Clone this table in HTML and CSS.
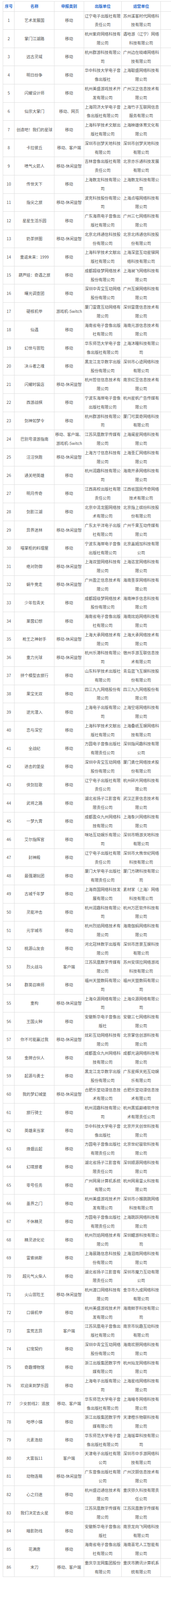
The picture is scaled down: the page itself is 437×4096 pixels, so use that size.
FILE: index.html
```html
<!DOCTYPE html>
<html lang="zh-CN">
<head>
<meta charset="utf-8">
<title>游戏名单</title>
<link rel="stylesheet" href="styles.css">
</head>
<body>
<div class="page">
<table class="list">
<colgroup>
<col class="c-no"><col class="c-name"><col class="c-type"><col class="c-pub"><col class="c-op"><col class="c-more">
</colgroup>
<thead>
<tr><th>序号</th><th>名称</th><th>申报类别</th><th>出版单位</th><th>运营单位</th><th></th></tr>
</thead>
<tbody>
<tr><td>1</td><td>艺术发展国</td><td>移动</td><td>辽宁电子出版社有限责任公司</td><td>苏州溪客时代网络科技有限公司</td><td></td></tr>
<tr><td>2</td><td>掌门江湖路</td><td>移动</td><td>杭州紫府网络科技有限公司</td><td>遇哈游（辽宁）网络科技有限公司</td><td></td></tr>
<tr><td>3</td><td>远古灵域</td><td>移动</td><td>杭州群游科技有限公司</td><td>广州边在晓峰网络科技有限公司</td><td></td></tr>
<tr><td>4</td><td>明日纷争</td><td>移动</td><td>华中科技大学电子音像出版社</td><td>上海聪盛网络科技有限公司</td><td></td></tr>
<tr><td>5</td><td>闪耀设计师</td><td>移动</td><td>杭州美盛游戏技术开发有限公司</td><td>广州汉正信息技术有限公司</td><td></td></tr>
<tr><td>6</td><td>仙宗大掌门</td><td>移动、网页</td><td>上海同济大学电子音像出版社有限公司</td><td>上海竹子互联网信息服务有限公司</td><td></td></tr>
<tr><td>7</td><td>创造吧！我们的星球</td><td>移动</td><td>上海科学技术文献出版社有限公司</td><td>上海映雄体育文化有限公司</td><td></td></tr>
<tr><td>8</td><td>卡拉彼丘</td><td>移动、客户端</td><td>深圳市创梦天地科技有限公司</td><td>深圳市创梦天地科技有限公司</td><td></td></tr>
<tr><td>9</td><td>喷气火箭人</td><td>移动-休闲益智</td><td>吉林音像出版社有限责任公司</td><td>北京亦乐通科技发展有限公司</td><td></td></tr>
<tr><td>10</td><td>传世天下</td><td>移动</td><td>上海数龙科技有限公司</td><td>上海数龙科技有限公司</td><td></td></tr>
<tr><td>11</td><td>指尖之旅</td><td>移动-休闲益智</td><td>波克科技股份有限公司</td><td>上海点喵网络科技有限公司</td><td></td></tr>
<tr><td>12</td><td>星星生活乐园</td><td>移动</td><td>广东海燕电子音像出版社有限公司</td><td>广州三七网络科技有限公司</td><td></td></tr>
<tr><td>13</td><td>奶茶拼图</td><td>移动-休闲益智</td><td>北京北纬通信科技股份有限公司</td><td>北京北纬通信科技股份有限公司</td><td></td></tr>
<tr><td>14</td><td>重返未来：1999</td><td>移动</td><td>上海科学技术文献出版社有限公司</td><td>上海深蓝互动星锑网络科技有限公司</td><td></td></tr>
<tr><td>15</td><td>葫芦娃：奇遇之旅</td><td>移动</td><td>成都超级梦网络技术股份有限公司</td><td>上海昶飞网络科技有限公司</td><td></td></tr>
<tr><td>16</td><td>曙光调查团</td><td>移动</td><td>深圳中青宝互动网络股份有限公司</td><td>广州互娱网络科技有限公司</td><td></td></tr>
<tr><td>17</td><td>硬核机甲</td><td>游戏机-Switch</td><td>厦门雷霆互动网络有限公司</td><td>深圳雷霆信息技术有限公司</td><td></td></tr>
<tr><td>18</td><td>仙遇</td><td>移动</td><td>海南省电子音像出版社有限公司</td><td>海南元游信息技术有限公司</td><td></td></tr>
<tr><td>19</td><td>幻世与冒险</td><td>移动</td><td>华东师范大学电子音像出版社有限公司</td><td>上海沐瞳科技有限公司</td><td></td></tr>
<tr><td>20</td><td>决斗者之魂</td><td>移动</td><td>黑龙江龙华数字出版股份有限公司</td><td>深圳市心迹网络科技有限公司</td><td></td></tr>
<tr><td>21</td><td>闪耀时装店</td><td>移动-休闲益智</td><td>杭州哲信信息技术有限公司</td><td>南京红豆信息技术有限公司</td><td></td></tr>
<tr><td>22</td><td>西游战棋</td><td>移动</td><td>宁波东海岸电子音像出版社有限公司</td><td>杭州星帆广告传媒有限公司</td><td></td></tr>
<tr><td>23</td><td>剑神如梦令</td><td>移动</td><td>杭州群游科技有限公司</td><td>厦门可莫奇网络科技有限公司</td><td></td></tr>
<tr><td>24</td><td>巴别号漫游指南</td><td>移动、客户端、游戏机-Switch</td><td>江苏凤凰数字传媒有限公司</td><td>上海阑星网络科技有限公司</td><td></td></tr>
<tr><td>25</td><td>汪汪快跑</td><td>移动-休闲益智</td><td>上海方寸信息科技有限公司</td><td>上海圣汇网络科技有限公司</td><td></td></tr>
<tr><td>26</td><td>通关吧英雄</td><td>移动</td><td>杭州润趣科技有限公司</td><td>海南开承网络科技有限公司</td><td></td></tr>
<tr><td>27</td><td>明月传奇</td><td>移动</td><td>江西高校出版社有限责任公司</td><td>江西省国民传奇网络技术有限公司</td><td></td></tr>
<tr><td>28</td><td>剑影江湖</td><td>移动</td><td>北京中清龙图网络技术有限公司</td><td>北京指上缤纷科技股份有限公司</td><td></td></tr>
<tr><td>29</td><td>异界迷林</td><td>移动-休闲益智</td><td>广东太平洋电子出版社有限公司</td><td>广州千果互动传媒有限公司</td><td></td></tr>
<tr><td>30</td><td>喵掌柜的料理屋</td><td>移动</td><td>宁波东海岸电子音像出版社有限公司</td><td>北京盖姆加科技有限公司</td><td></td></tr>
<tr><td>31</td><td>绝对防御</td><td>移动-休闲益智</td><td>上海双盟网络科技有限公司</td><td>上海迄宣网络科技有限公司</td><td></td></tr>
<tr><td>32</td><td>蜗牛竞走</td><td>移动-休闲益智</td><td>广州盈正信息技术有限公司</td><td>海南圣享网络科技有限公司</td><td></td></tr>
<tr><td>33</td><td>少年包青天</td><td>移动</td><td>成都超级梦网络技术股份有限公司</td><td>海南神手信息科技有限公司</td><td></td></tr>
<tr><td>34</td><td>莱茵幻想</td><td>移动</td><td>海南省电子音像出版社有限公司</td><td>海南炫焰网络科技有限公司</td><td></td></tr>
<tr><td>35</td><td>枪王之神射手</td><td>移动-休闲益智</td><td>上海大承网络技术有限公司</td><td>上海大承网络技术有限公司</td><td></td></tr>
<tr><td>36</td><td>重力光球</td><td>移动-休闲益智</td><td>杭州乐港科技有限公司</td><td>宿州手游互联信息技术有限公司</td><td></td></tr>
<tr><td>37</td><td>拼个模型去旅行</td><td>移动</td><td>山东科学技术出版社有限公司</td><td>青岛蓝飞互娱科技股份有限公司</td><td></td></tr>
<tr><td>38</td><td>果宝无双</td><td>移动</td><td>四三九九网络股份有限公司</td><td>四三九九网络股份有限公司</td><td></td></tr>
<tr><td>39</td><td>逆光潜入</td><td>移动</td><td>上海电子出版有限公司</td><td>上海空塔网络科技有限公司</td><td></td></tr>
<tr><td>40</td><td>恋与深空</td><td>移动</td><td>上海科学技术文献出版社有限公司</td><td>上海叠纸互娱网络科技有限公司</td><td></td></tr>
<tr><td>41</td><td>全战纪</td><td>移动</td><td>方圆电子音像出版社有限责任公司</td><td>深圳指间趣科技有限公司</td><td></td></tr>
<tr><td>42</td><td>进击的堡垒</td><td>移动</td><td>深圳中青宝互动网络股份有限公司</td><td>厦门勇仕网络技术股份有限公司</td><td></td></tr>
<tr><td>43</td><td>侠剑狂歌</td><td>移动</td><td>辽宁电子出版社有限责任公司</td><td>杭州碎片网络科技有限公司</td><td></td></tr>
<tr><td>44</td><td>武将之路</td><td>移动</td><td>湖北省扬子江影音有限责任公司</td><td>武汉正景信息技术有限公司</td><td></td></tr>
<tr><td>45</td><td>一梦九霄</td><td>移动</td><td>成都盈众九州网络科技有限公司</td><td>上海象兴网络科技有限公司</td><td></td></tr>
<tr><td>46</td><td>艾尔指挥官</td><td>移动</td><td>咪咕互动娱乐有限公司</td><td>深圳市畅游天地科技有限公司</td><td></td></tr>
<tr><td>47</td><td>封神殿</td><td>移动</td><td>辽宁电子出版社有限责任公司</td><td>深圳市大熊世纪网络科技有限公司</td><td></td></tr>
<tr><td>48</td><td>最强潮玩团</td><td>移动</td><td>厦门大学电子出版社有限责任公司</td><td>厦门方碑科技有限公司</td><td></td></tr>
<tr><td>49</td><td>古城千年梦</td><td>移动</td><td>上海商国网络科技发展有限公司</td><td>素材家（上海）网络科技有限公司</td><td></td></tr>
<tr><td>50</td><td>灵能冲击</td><td>移动</td><td>杭州润趣科技有限公司</td><td>杭州万匠软件科技有限公司</td><td></td></tr>
<tr><td>51</td><td>元宇城市</td><td>移动</td><td>杭州烈焰网络技术有限公司</td><td>海南伽蚂网络科技有限公司</td><td></td></tr>
<tr><td>52</td><td>桃源山友会</td><td>移动</td><td>河北冠林数字出版有限公司</td><td>深圳市愿景互娱科技有限公司</td><td></td></tr>
<tr><td>53</td><td>烈火战马</td><td>客户端</td><td>江苏凤凰数字传媒有限公司</td><td>苏州安琪拉网络游戏科技有限公司</td><td></td></tr>
<tr><td>54</td><td>群英召唤师</td><td>移动</td><td>福州天盟数码有限公司</td><td>福州天盟数码有限公司</td><td></td></tr>
<tr><td>55</td><td>重构</td><td>移动-休闲益智</td><td>上海众源网络有限公司</td><td>上海众源网络有限公司</td><td></td></tr>
<tr><td>56</td><td>王国火种</td><td>移动</td><td>安徽新华电子音像出版社</td><td>安徽三七网络科技有限公司</td><td></td></tr>
<tr><td>57</td><td>你不可能赢过我</td><td>移动-休闲益智</td><td>炫彩互动网络科技有限公司</td><td>北京掌信创游科技有限公司</td><td></td></tr>
<tr><td>58</td><td>金牌合伙人</td><td>移动</td><td>成都盈众九州网络科技有限公司</td><td>成都光涵网络科技有限公司</td><td></td></tr>
<tr><td>59</td><td>起源与勇士</td><td>移动</td><td>黑龙江龙华数字出版股份有限公司</td><td>广东星辉天拓互动娱乐有限公司</td><td></td></tr>
<tr><td>60</td><td>我的梦幻城堡</td><td>移动-休闲益智</td><td>合肥乐堂动漫信息技术有限公司</td><td>合肥乐堂动漫信息技术有限公司</td><td></td></tr>
<tr><td>61</td><td>旅行骑士</td><td>移动</td><td>杭州润趣科技有限公司</td><td>杭州黑狐巅峰软件技术有限责任公司</td><td></td></tr>
<tr><td>62</td><td>英雄来当家</td><td>移动</td><td>华中科技大学电子音像出版社</td><td>北京开天创世科技有限公司</td><td></td></tr>
<tr><td>63</td><td>烽烟云起</td><td>移动</td><td>方圆电子音像出版社有限责任公司</td><td>北京世纪骏软科技有限公司</td><td></td></tr>
<tr><td>64</td><td>幻境旅者</td><td>移动</td><td>湖北省扬子江影音有限责任公司</td><td>深圳顺源网络科技有限公司</td><td></td></tr>
<tr><td>65</td><td>零号任务</td><td>移动</td><td>广州网易计算机系统有限公司</td><td>杭州网易雷火科技有限公司</td><td></td></tr>
<tr><td>66</td><td>墨界之门</td><td>移动</td><td>杭州美盛游戏技术开发有限公司</td><td>深圳市小猴跳跳网络科技有限公司</td><td></td></tr>
<tr><td>67</td><td>不休精灵</td><td>移动</td><td>方圆电子音像出版社有限责任公司</td><td>上海跳跃网络科技有限公司</td><td></td></tr>
<tr><td>68</td><td>精灵进化论</td><td>移动</td><td>杭州烈焰网络技术有限公司</td><td>深圳鲤游科技有限公司</td><td></td></tr>
<tr><td>69</td><td>雷索纳斯</td><td>移动</td><td>上海晨路信息科技股份有限公司</td><td>上海泪雨网络科技有限公司</td><td></td></tr>
<tr><td>70</td><td>超元气火柴人</td><td>移动</td><td>湖北省扬子江影音有限责任公司</td><td>深圳市魔力互动有限公司</td><td></td></tr>
<tr><td>71</td><td>火山冒险王</td><td>移动-休闲益智</td><td>杭州渡口网络科技有限公司</td><td>金华市九成网络科技有限公司</td><td></td></tr>
<tr><td>72</td><td>口袋机甲</td><td>移动</td><td>杭州美盛游戏技术开发有限公司</td><td>海南鲜芋科技有限公司</td><td></td></tr>
<tr><td>73</td><td>蛮荒志异</td><td>客户端</td><td>江苏凤凰电子音像出版社有限公司</td><td>南京市玩趣互动科技有限公司</td><td></td></tr>
<tr><td>74</td><td>幻宠契约</td><td>移动</td><td>深圳中青宝互动网络股份有限公司</td><td>海南欢朋网络科技有限公司</td><td></td></tr>
<tr><td>75</td><td>奇趣博物馆</td><td>移动</td><td>浙江出版集团数字传媒有限公司</td><td>杭州灿龙网络科技有限公司</td><td></td></tr>
<tr><td>76</td><td>欢迎来到梦乐园</td><td>移动</td><td>上海电子出版有限公司</td><td>上海星线网络科技有限公司</td><td></td></tr>
<tr><td>77</td><td>少女前线2：追放</td><td>移动、客户端</td><td>华东师范大学电子音像出版社有限公司</td><td>上海暗冬网络科技有限公司</td><td></td></tr>
<tr><td>78</td><td>哈啰小镇</td><td>移动</td><td>浙江出版集团数字传媒有限公司</td><td>天津橙乐物联科技有限公司</td><td></td></tr>
<tr><td>79</td><td>元素浩劫</td><td>移动</td><td>华东师范大学电子音像出版社有限公司</td><td>上海瑶草科技有限公司</td><td></td></tr>
<tr><td>80</td><td>大富翁11</td><td>客户端</td><td>天津电子出版社有限公司</td><td>深圳市中手游网络科技有限公司</td><td></td></tr>
<tr><td>81</td><td>动物连萌</td><td>移动-休闲益智</td><td>广东音像出版社有限公司</td><td>广州汶颢信息技术有限公司</td><td></td></tr>
<tr><td>82</td><td>心之归途</td><td>移动</td><td>杭州盛迈通信技术有限公司</td><td>重庆弥久科技有限责任公司</td><td></td></tr>
<tr><td>83</td><td>我们决定去火星</td><td>移动</td><td>江苏凤凰数字传媒有限公司</td><td>江苏凤凰数字传媒有限公司</td><td></td></tr>
<tr><td>84</td><td>暗影防线</td><td>移动</td><td>安徽新华电子音像出版社</td><td>南京龙向飞网络科技有限公司</td><td></td></tr>
<tr><td>85</td><td>花满唐</td><td>移动</td><td>海南省电子音像出版社有限公司</td><td>海南喜宅人工智能有限公司</td><td></td></tr>
<tr><td>86</td><td>末刀</td><td>移动、客户端</td><td>重庆华龙网集团股份有限公司</td><td>重庆市腾讯计算机系统有限公司</td><td></td></tr>
</tbody>
</table>
</div>
</body>
</html>
```
FILE: styles.css
```css
html, body {
  margin: 0;
  padding: 0;
  background: #ffffff;
}

body {
  font-family: "Noto Sans CJK SC", "Noto Sans", sans-serif;
}

.page {
  width: 437px;
  overflow: hidden;
  padding: 3.2px 0 0 7.4px;
  box-sizing: border-box;
}

.list {
  table-layout: fixed;
  border-collapse: collapse;
  width: 462.8px;
  font-size: 10.2px;
  line-height: 22.8px;
  color: #595959;
}

.c-no { width: 29.1px; }
.c-name { width: 102px; }
.c-type { width: 75.1px; }
.c-pub { width: 96.4px; }
.c-op { width: 100.2px; }
.c-more { width: 60px; }

.list th,
.list td {
  border: 1px solid #dedede;
  padding: 0 1px;
  text-align: center;
  vertical-align: middle;
}

.list td {
  height: 45.6px;
}

.list th {
  padding-top: 0.8px;
  padding-bottom: 0.8px;
  color: #2f6fcf;
  font-weight: bold;
}
```
